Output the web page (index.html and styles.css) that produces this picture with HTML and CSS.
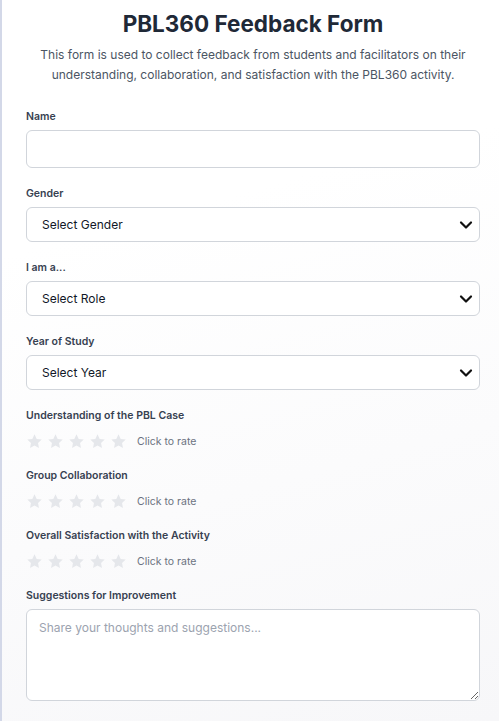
FILE: index.html
```html
<!DOCTYPE html>
<html lang="en">
<head>
<meta charset="utf-8">
<title>PBL360 Feedback Form</title>
<link rel="stylesheet" href="styles.css">
</head>
<body>
<div class="card">
  <h1 class="title">PBL360 Feedback Form</h1>
  <p class="intro">This form is used to collect feedback from students and facilitators on their understanding, collaboration, and satisfaction with the PBL360 activity.</p>

  <form class="form">
    <div class="field">
      <label class="label">Name</label>
      <input class="input" type="text">
    </div>
    <div class="field">
      <label class="label">Gender</label>
      <select class="select"><option>Select Gender</option></select>
    </div>
    <div class="field">
      <label class="label">I am a...</label>
      <select class="select"><option>Select Role</option></select>
    </div>
    <div class="field">
      <label class="label">Year of Study</label>
      <select class="select"><option>Select Year</option></select>
    </div>

    <div class="field rating-field">
      <label class="label">Understanding of the PBL Case</label>
      <div class="rating">
        <span class="stars">
          <svg class="star" viewBox="0 0 24 24"><path d="M12 1.8l3.1 6.6 7.1.9-5.2 4.9 1.3 7.1L12 17.8l-6.3 3.5L7 14.2 1.8 9.3l7.1-.9z"/></svg>
          <svg class="star" viewBox="0 0 24 24"><path d="M12 1.8l3.1 6.6 7.1.9-5.2 4.9 1.3 7.1L12 17.8l-6.3 3.5L7 14.2 1.8 9.3l7.1-.9z"/></svg>
          <svg class="star" viewBox="0 0 24 24"><path d="M12 1.8l3.1 6.6 7.1.9-5.2 4.9 1.3 7.1L12 17.8l-6.3 3.5L7 14.2 1.8 9.3l7.1-.9z"/></svg>
          <svg class="star" viewBox="0 0 24 24"><path d="M12 1.8l3.1 6.6 7.1.9-5.2 4.9 1.3 7.1L12 17.8l-6.3 3.5L7 14.2 1.8 9.3l7.1-.9z"/></svg>
          <svg class="star" viewBox="0 0 24 24"><path d="M12 1.8l3.1 6.6 7.1.9-5.2 4.9 1.3 7.1L12 17.8l-6.3 3.5L7 14.2 1.8 9.3l7.1-.9z"/></svg>
        </span>
        <span class="hint">Click to rate</span>
      </div>
    </div>
    <div class="field rating-field">
      <label class="label">Group Collaboration</label>
      <div class="rating">
        <span class="stars">
          <svg class="star" viewBox="0 0 24 24"><path d="M12 1.8l3.1 6.6 7.1.9-5.2 4.9 1.3 7.1L12 17.8l-6.3 3.5L7 14.2 1.8 9.3l7.1-.9z"/></svg>
          <svg class="star" viewBox="0 0 24 24"><path d="M12 1.8l3.1 6.6 7.1.9-5.2 4.9 1.3 7.1L12 17.8l-6.3 3.5L7 14.2 1.8 9.3l7.1-.9z"/></svg>
          <svg class="star" viewBox="0 0 24 24"><path d="M12 1.8l3.1 6.6 7.1.9-5.2 4.9 1.3 7.1L12 17.8l-6.3 3.5L7 14.2 1.8 9.3l7.1-.9z"/></svg>
          <svg class="star" viewBox="0 0 24 24"><path d="M12 1.8l3.1 6.6 7.1.9-5.2 4.9 1.3 7.1L12 17.8l-6.3 3.5L7 14.2 1.8 9.3l7.1-.9z"/></svg>
          <svg class="star" viewBox="0 0 24 24"><path d="M12 1.8l3.1 6.6 7.1.9-5.2 4.9 1.3 7.1L12 17.8l-6.3 3.5L7 14.2 1.8 9.3l7.1-.9z"/></svg>
        </span>
        <span class="hint">Click to rate</span>
      </div>
    </div>
    <div class="field rating-field">
      <label class="label">Overall Satisfaction with the Activity</label>
      <div class="rating">
        <span class="stars">
          <svg class="star" viewBox="0 0 24 24"><path d="M12 1.8l3.1 6.6 7.1.9-5.2 4.9 1.3 7.1L12 17.8l-6.3 3.5L7 14.2 1.8 9.3l7.1-.9z"/></svg>
          <svg class="star" viewBox="0 0 24 24"><path d="M12 1.8l3.1 6.6 7.1.9-5.2 4.9 1.3 7.1L12 17.8l-6.3 3.5L7 14.2 1.8 9.3l7.1-.9z"/></svg>
          <svg class="star" viewBox="0 0 24 24"><path d="M12 1.8l3.1 6.6 7.1.9-5.2 4.9 1.3 7.1L12 17.8l-6.3 3.5L7 14.2 1.8 9.3l7.1-.9z"/></svg>
          <svg class="star" viewBox="0 0 24 24"><path d="M12 1.8l3.1 6.6 7.1.9-5.2 4.9 1.3 7.1L12 17.8l-6.3 3.5L7 14.2 1.8 9.3l7.1-.9z"/></svg>
          <svg class="star" viewBox="0 0 24 24"><path d="M12 1.8l3.1 6.6 7.1.9-5.2 4.9 1.3 7.1L12 17.8l-6.3 3.5L7 14.2 1.8 9.3l7.1-.9z"/></svg>
        </span>
        <span class="hint">Click to rate</span>
      </div>
    </div>

    <div class="field">
      <label class="label">Suggestions for Improvement</label>
      <textarea class="textarea" placeholder="Share your thoughts and suggestions..."></textarea>
    </div>
  </form>
</div>
</body>
</html>
```
FILE: styles.css
```css
html, body {
  margin: 0;
  padding: 0;
}
body {
  font-family: Inter, "Noto Sans", sans-serif;
  background: linear-gradient(165deg, #ffffff 0%, #ffffff 30%, #f7f7f9 100%);
  min-height: 721px;
  overflow: hidden;
}
.card {
  border-left: 2px solid #d3d8e8;
  padding: 9px 0 0 24px;
  width: 454px;
  min-height: 712px;
  box-sizing: content-box;
}
.title {
  margin: 0;
  text-align: center;
  font-size: 22.5px;
  font-weight: 700;
  color: #1f2937;
  line-height: 30px;
}
.intro {
  margin: 6px 0 0;
  text-align: center;
  font-size: 12px;
  line-height: 20px;
  color: #4b5563;
}
.form {
  margin-top: 24px;
  display: flex;
  flex-direction: column;
  gap: 18px;
}
.field {
  display: flex;
  flex-direction: column;
  gap: 5px;
}
.label {
  font-size: 10.5px;
  font-weight: 600;
  color: #374151;
  line-height: 16px;
}
.input, .select, .textarea {
  box-sizing: border-box;
  width: 454px;
  border: 1px solid #d1d5db;
  border-radius: 6px;
  background: #ffffff;
  font-family: inherit;
  font-size: 12px;
  color: #111827;
  margin: 0;
}
.input {
  height: 38px;
  padding: 0 12px;
}
.select {
  appearance: none;
  -webkit-appearance: none;
  height: 35px;
  padding: 0 30px 0 15px;
  background-image: url("data:image/svg+xml,%3Csvg xmlns='http://www.w3.org/2000/svg' width='14' height='10' viewBox='0 0 14 10'%3E%3Cpath d='M2 2.5 L7 7.5 L12 2.5' fill='none' stroke='%23111' stroke-width='2.2' stroke-linecap='round' stroke-linejoin='round'/%3E%3C/svg%3E");
  background-repeat: no-repeat;
  background-position: right 6px center;
  background-size: 14px 10px;
}
.textarea {
  height: 92px;
  padding: 10px 12px;
  resize: vertical;
  display: block;
}
.textarea::placeholder {
  color: #9ca3af;
}
.rating-field {
  gap: 9px;
}
.rating {
  display: flex;
  align-items: center;
  gap: 10px;
  height: 17px;
}
.stars {
  display: flex;
  gap: 4px;
}
.star {
  width: 17px;
  height: 17px;
  fill: #e5e7eb;
  display: block;
}
.hint {
  font-size: 10.5px;
  color: #6b7280;
}
```
